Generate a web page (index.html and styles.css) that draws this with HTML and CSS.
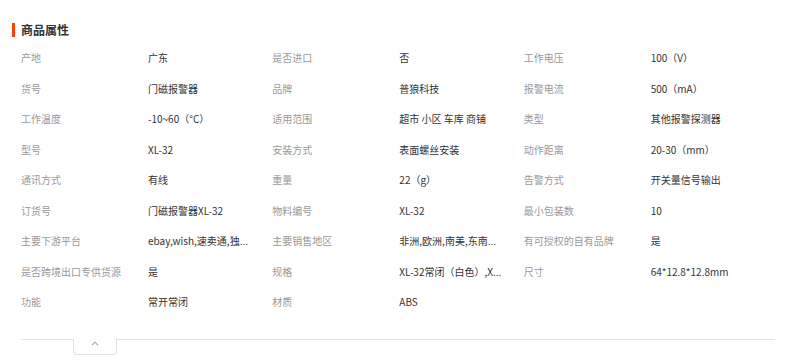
FILE: index.html
```html
<!DOCTYPE html>
<html lang="zh-CN">
<head>
<meta charset="utf-8">
<title>商品属性</title>
<link rel="stylesheet" href="styles.css">
</head>
<body>
<section class="attrs">
  <h2 class="attrs-title">商品属性</h2>
  <div class="attrs-grid">
    <div class="k">产地</div><div class="v">广东</div>
    <div class="k">是否进口</div><div class="v">否</div>
    <div class="k">工作电压</div><div class="v">100（V）</div>

    <div class="k">货号</div><div class="v">门磁报警器</div>
    <div class="k">品牌</div><div class="v">普狼科技</div>
    <div class="k">报警电流</div><div class="v">500（mA）</div>

    <div class="k">工作温度</div><div class="v">-10~60（°C）</div>
    <div class="k">适用范围</div><div class="v">超市 小区 车库 商铺</div>
    <div class="k">类型</div><div class="v">其他报警探测器</div>

    <div class="k">型号</div><div class="v">XL-32</div>
    <div class="k">安装方式</div><div class="v">表面螺丝安装</div>
    <div class="k">动作距离</div><div class="v">20-30（mm）</div>

    <div class="k">通讯方式</div><div class="v">有线</div>
    <div class="k">重量</div><div class="v">22（g）</div>
    <div class="k">告警方式</div><div class="v">开关量信号输出</div>

    <div class="k">订货号</div><div class="v">门磁报警器XL-32</div>
    <div class="k">物料编号</div><div class="v">XL-32</div>
    <div class="k">最小包装数</div><div class="v">10</div>

    <div class="k">主要下游平台</div><div class="v" title="ebay,wish,速卖通,独立站,亚马逊">ebay,wish,速卖通,独...</div>
    <div class="k">主要销售地区</div><div class="v" title="非洲,欧洲,南美,东南亚,北美">非洲,欧洲,南美,东南...</div>
    <div class="k">有可授权的自有品牌</div><div class="v">是</div>

    <div class="k">是否跨境出口专供货源</div><div class="v">是</div>
    <div class="k">规格</div><div class="v" title="XL-32常闭（白色）,XL-32常开（白色）">XL-32常闭（白色）,X...</div>
    <div class="k">尺寸</div><div class="v">64*12.8*12.8mm</div>

    <div class="k">功能</div><div class="v">常开常闭</div>
    <div class="k">材质</div><div class="v">ABS</div>
    <div class="k"></div><div class="v"></div>
  </div>
  <div class="attrs-foot">
    <button class="fold" type="button" aria-label="收起">
      <svg width="8" height="5" viewBox="0 0 8 5"><path d="M1 4.2 L4 1.2 L7 4.2" fill="none" stroke="#9aa3b5" stroke-width="1.1"/></svg>
    </button>
  </div>
</section>
</body>
</html>
```
FILE: styles.css
```css
html, body {
  margin: 0;
  padding: 0;
  background: #fff;
}
body {
  font-family: "Noto Sans CJK SC", "Microsoft YaHei", "Liberation Sans", sans-serif;
  color: #333;
}
.attrs {
  width: 802px;
  height: 360px;
  padding: 23px 27px 0 12px;
  box-sizing: border-box;
}
.attrs-title {
  margin: 0;
  padding-left: 6px;
  border-left: 3px solid #ff4000;
  font-size: 12px;
  font-weight: bold;
  line-height: 14px;
  height: 14px;
  color: #333;
}
.attrs-grid {
  margin: 6px 0 0 9px;
  display: grid;
  grid-template-columns: 127px 1fr 127px 1fr 127px 1fr;
  grid-auto-rows: 30.5px;
  font-size: 10px;
  line-height: 30.5px;
}
.k {
  color: #999;
  white-space: nowrap;
}
.v {
  color: #333;
  white-space: nowrap;
  overflow: hidden;
  text-overflow: ellipsis;
  padding-right: 12px;
}
.attrs-foot {
  margin: 21px 0 0 9px;
  border-top: 1px solid #e6e6e6;
  position: relative;
  height: 20px;
}
.fold {
  position: absolute;
  left: 52px;
  top: -1px;
  width: 44px;
  height: 16px;
  margin: 0;
  padding: 0;
  background: #fff;
  border: 1px solid #e1e1e1;
  border-top: none;
  border-radius: 0 0 4px 4px;
  display: flex;
  align-items: center;
  justify-content: center;
  padding-bottom: 5px;
}
.fold svg { display: block; }
```
